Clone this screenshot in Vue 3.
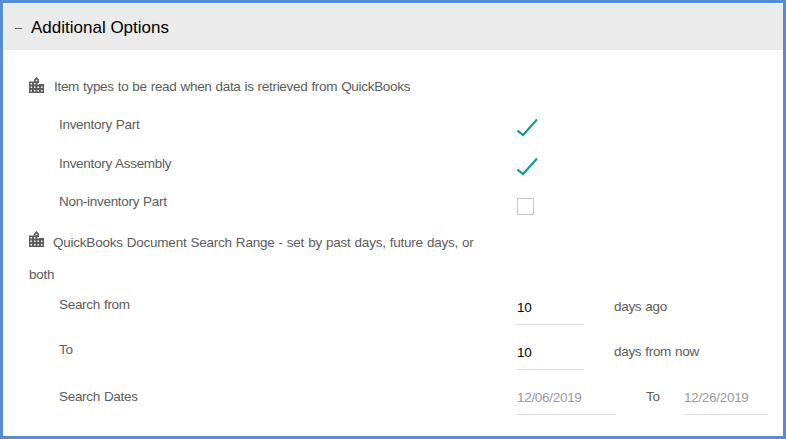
<script setup>
import { ref } from 'vue'

const itemTypes = ref([
  { label: 'Inventory Part', checked: true },
  { label: 'Inventory Assembly', checked: true },
  { label: 'Non-inventory Part', checked: false },
])

const cityPath =
  'M0 4.500h5V2.500L7.500 0 10 2.500V7h5v9H0z' +
  'M1.500 6v1.500H3V6zM1.500 9.500V11H3V9.500zM1.500 13v1.500H3V13z' +
  'M5 6v1.500h1.500V6zM5 9.500V11h1.500V9.500zM5 13v1.500h1.500V13z' +
  'M6.700 2.700v1.500h1.600V2.700z' +
  'M8.500 6v1.500H10V6zM8.500 9.500V11H10V9.500zM8.500 13v1.500H10V13z' +
  'M12 9.500V11h1.500V9.500zM12 13v1.500h1.500V13z'
</script>

<template>
  <main class="panel">
    <header class="bar">
      <span class="minus"></span>
      <h1>Additional Options</h1>
    </header>
    <section class="content">
      <h2 class="heading">
        <svg class="building" width="15" height="16" viewBox="0 0 15 16">
          <path :d="cityPath" fill-rule="evenodd" />
        </svg>
        <span>Item types to be read when data is retrieved from QuickBooks</span>
      </h2>
      <div v-for="item in itemTypes" :key="item.label" class="row check-row">
        <span class="label">{{ item.label }}</span>
        <svg v-if="item.checked" class="tick" width="22" height="20" viewBox="0 0 22 20">
          <path d="M.5 12.500L6 17 20 1.500" />
        </svg>
        <span v-else class="box"></span>
      </div>
      <h2 class="heading second">
        <svg class="building" width="15" height="16" viewBox="0 0 15 16">
          <path :d="cityPath" fill-rule="evenodd" />
        </svg>
        <span>QuickBooks Document Search Range - set by past days, future days, or both</span>
      </h2>
      <div class="row field-row">
        <span class="label">Search from</span>
        <span class="field days">10</span>
        <span class="suffix">days ago</span>
      </div>
      <div class="row field-row">
        <span class="label">To</span>
        <span class="field days">10</span>
        <span class="suffix">days from now</span>
      </div>
      <div class="row field-row dates">
        <span class="label">Search Dates</span>
        <span class="field date">12/06/2019</span>
        <span class="suffix to">To</span>
        <span class="field date end">12/26/2019</span>
      </div>
    </section>
  </main>
</template>

<style>
body { margin: 0; }
</style>

<style scoped>
.panel {
  box-sizing: border-box;
  width: 786px;
  height: 439px;
  border: 3px solid #548dd4;
  padding: 1px 0 0 1px;
  background: #fff;
  color: #5c5c5c;
  font: 13.5px "Liberation Sans", Arial, sans-serif;
  letter-spacing: -0.3px;
  word-spacing: 0.5px;
  overflow: hidden;
}
.bar {
  box-sizing: border-box;
  display: flex;
  align-items: center;
  height: 46px;
  padding: 1px 0 0 11px;
  background: #ebebeb;
}
.minus {
  width: 7px;
  height: 1px;
  margin: 2px 9px 0 0;
  background: #5c5c5c;
}
h1 {
  margin: 0;
  font-size: 17px;
  font-weight: 400;
  letter-spacing: 0;
  word-spacing: 0;
  color: #000;
}
.content { padding: 21px 0 0 25px; }
.heading {
  width: 460px;
  margin: 0 0 3px;
  font-size: 13.5px;
  font-weight: 400;
  line-height: 32px;
  letter-spacing: -0.3px;
}
.building {
  margin-right: 6px;
  vertical-align: -2px;
  fill: #5c5c5c;
}
.heading span { margin-left: 4px; }
.second {
  margin: 5px 0 0;
  letter-spacing: -0.23px;
}
.second .building {
  margin-right: 5px;
  vertical-align: 0;
}
.row {
  display: flex;
  align-items: flex-start;
  padding-left: 30px;
}
.label { width: 458px; line-height: 38px; }
.check-row { height: 38.6px; }
.tick {
  margin-top: 12px;
  fill: none;
  stroke: #0a9b8a;
  stroke-width: 2;
}
.box {
  box-sizing: border-box;
  width: 17px;
  height: 17px;
  margin-top: 15px;
  border: 1px solid #c6c6c6;
}
.field-row { height: 45px; }
.field-row .label { line-height: 28px; }
.field {
  line-height: 33px;
  border-bottom: 1px solid #dcdcdc;
}
.days {
  width: 67px;
  margin-right: 30px;
  color: #000;
}
.suffix { line-height: 32px; }
.field-row.dates .label { line-height: 31px; }
.date { width: 99px; color: #9a9a9a; }
.to { width: 38px; margin-left: 30px; }
.end { width: 84px; }
</style>
